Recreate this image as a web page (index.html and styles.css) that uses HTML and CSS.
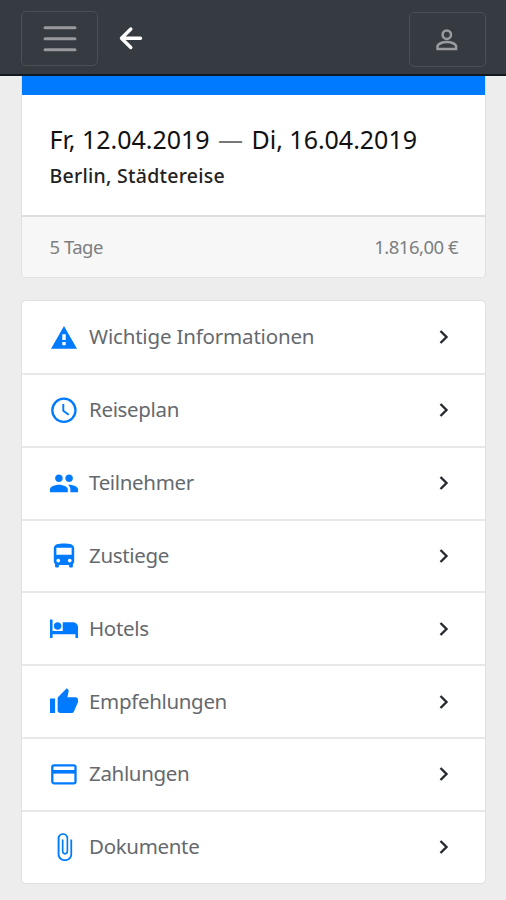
FILE: index.html
```html
<!DOCTYPE html>
<html lang="de">
<head>
<meta charset="utf-8">
<title>Berlin, Städtereise</title>
<link rel="stylesheet" href="styles.css">
</head>
<body>
<header class="navbar">
  <button class="nav-button" aria-label="Menü"><svg width="34" height="28" viewBox="0 0 34 28"><path d="M2 2.8h30M2 13.8h30M2 24.8h30" stroke="#97999c" stroke-width="3" stroke-linecap="round"/></svg></button>
  <a class="back" aria-label="Zurück"><svg width="24" height="24" viewBox="0 0 24 24"><path d="M11.800 3L2.500 12.300l9.300 9.200M3 12.300h18.500" fill="none" stroke="#fff" stroke-width="3.400" stroke-linecap="round" stroke-linejoin="round"/></svg></a>
  <button class="nav-button nav-user" aria-label="Konto"><svg width="22" height="22" viewBox="0 0 22 22" fill="none" stroke="#999b9e" stroke-width="2.500"><circle cx="10.800" cy="5.700" r="4.200"/><path d="M1.500 20v-2.400c0-3 5-4.500 9.300-4.500s9.300 1.500 9.300 4.500V20z"/></svg></button>
</header>
<main>
  <section class="trip">
    <div class="trip-bar"></div>
    <div class="trip-body">
      <h1><span class="from">Fr, 12.04.2019</span><span class="dash">—</span><span class="to">Di, 16.04.2019</span></h1>
      <h2>Berlin, Städtereise</h2>
    </div>
    <footer class="trip-footer"><span>5 Tage</span><span class="price">1.816,00 €</span></footer>
  </section>
  <nav class="menu">
    <a class="row"><svg class="icon" viewBox="0 0 28 28"><path fill-rule="evenodd" d="M14 3L27 25.700H1zM12.300 11.300v5.800h3.400v-5.800zM12.300 19v3.200h3.400V19z"/></svg><span class="label wide">Wichtige Informationen</span><svg class="chevron" viewBox="0 0 12 16"><path d="M2.500 2l6 6-6 6"/></svg></a>
    <a class="row"><svg class="icon line" viewBox="0 0 28 28"><circle cx="13.900" cy="14.300" r="11.600"/><path class="hands" d="M13.300 8v6.800l5.400 4"/></svg><span class="label">Reiseplan</span><svg class="chevron" viewBox="0 0 12 16"><path d="M2.500 2l6 6-6 6"/></svg></a>
    <a class="row"><svg class="icon" viewBox="1 .700 22 22"><path d="M16 11c1.660 0 2.990-1.340 2.990-3S17.660 5 16 5s-3 1.340-3 3 1.340 3 3 3zm-8 0c1.660 0 2.990-1.340 2.990-3S9.660 5 8 5 5 6.340 5 8s1.340 3 3 3zm0 2c-2.330 0-7 1.170-7 3.500V19h14v-2.500c0-2.330-4.670-3.500-7-3.500zm8 0c-.290 0-.620.020-.970.050 1.160.840 1.970 1.970 1.970 3.450V19h6v-2.500c0-2.330-4.670-3.500-7-3.500z"/></svg><span class="label">Teilnehmer</span><svg class="chevron" viewBox="0 0 12 16"><path d="M2.500 2l6 6-6 6"/></svg></a>
    <a class="row"><svg class="icon" viewBox="1 .100 22 22"><path d="M4 16c0 .880.390 1.670 1 2.220V20c0 .550.450 1 1 1h1c.550 0 1-.450 1-1v-1h8v1c0 .550.450 1 1 1h1c.550 0 1-.450 1-1v-1.780c.610-.550 1-1.340 1-2.220V6c0-3.500-3.580-4-8-4s-8 .500-8 4v10zm3.500 1c-.830 0-1.500-.670-1.500-1.500S6.670 14 7.500 14s1.500.670 1.500 1.500S8.330 17 7.500 17zm9 0c-.830 0-1.500-.670-1.500-1.500s.670-1.500 1.500-1.500 1.500.670 1.500 1.500-.670 1.500-1.500 1.500zm1.500-6H6V5.500h12z"/></svg><span class="label">Zustiege</span><svg class="chevron" viewBox="0 0 12 16"><path d="M2.500 2l6 6-6 6"/></svg></a>
    <a class="row"><svg class="icon" viewBox="1 .600 22 22"><path d="M7 13c1.660 0 3-1.340 3-3S8.660 7 7 7s-3 1.340-3 3 1.340 3 3 3zm12-6h-8v7H3V5H1v14.500h2V16.500h18v3h2V11c0-2.210-1.790-4-4-4z"/></svg><span class="label">Hotels</span><svg class="chevron" viewBox="0 0 12 16"><path d="M2.500 2l6 6-6 6"/></svg></a>
    <a class="row"><svg class="icon" viewBox="1 0 22 22"><path d="M1 20.500h4V9H1v11.500zM23 10c0-1.100-.900-2-2-2h-6.310l.950-4.570.030-.320c0-.410-.170-.790-.440-1.060L14.170 1 7.590 7.590C7.220 7.950 7 8.450 7 9v9.500c0 1.100.900 2 2 2h9c.830 0 1.540-.500 1.840-1.220l3.020-7.050c.090-.230.140-.470.140-.730V10z"/></svg><span class="label">Empfehlungen</span><svg class="chevron" viewBox="0 0 12 16"><path d="M2.500 2l6 6-6 6"/></svg></a>
    <a class="row"><svg class="icon line" viewBox="0 0 28 28"><rect x="2.300" y="5.300" width="23.200" height="18" rx="1.700"/><path class="stripe" d="M2.300 11.800h23.200"/></svg><span class="label">Zahlungen</span><svg class="chevron" viewBox="0 0 12 16"><path d="M2.500 2l6 6-6 6"/></svg></a>
    <a class="row"><svg class="icon" viewBox="1 .900 22 22"><path d="M17 6v11.500c0 2.210-1.790 4-4.250 4s-4.250-1.790-4.250-4V5c0-1.380 1.120-2.700 2.750-2.700S14 3.620 14 5v10.500c0 .550-.450 1-1.200 1s-1.200-.450-1.200-1V6h-1.300v9.500c0 1.380 1.120 2.400 2.500 2.400s2.500-1.020 2.500-2.400V5c0-2.210-1.790-4-4.050-4S7 2.790 7 5v12.500c0 3.040 2.560 5.400 5.700 5.400s5.700-2.360 5.700-5.400V6H17z"/></svg><span class="label">Dokumente</span><svg class="chevron" viewBox="0 0 12 16"><path d="M2.500 2l6 6-6 6"/></svg></a>
  </nav>
</main>
</body>
</html>
```
FILE: styles.css
```css
* { box-sizing: border-box; }
body {
  margin: 0;
  height: 900px;
  overflow: hidden;
  background: #ededed;
  font-family: "Noto Sans", "Open Sans", sans-serif;
}
.navbar {
  display: flex;
  height: 76px;
  padding: 11px 20px 0 21px;
  background: #363b42;
  border-bottom: 2px solid #101820;
}
.nav-button {
  display: flex;
  align-items: center;
  justify-content: center;
  width: 77px;
  height: 55px;
  padding: 0;
  background: none;
  border: 1.500px solid #4b5054;
  border-radius: 5px;
}
.back { margin: 15px 0 0 20.500px; height: 24px; }
.nav-user { margin: 1px 0 0 auto; }
.nav-user svg { margin-right: 1px; }
main { padding: 0 20px 0 21px; }
.trip {
  border: 1px solid #e0e0e0;
  border-top: 0;
  border-radius: 0 0 5px 5px;
  background: #fff;
  overflow: hidden;
}
.trip-bar { height: 19px; background: #007bff; }
.trip-body { height: 120px; padding: 26px 28px 0 27.500px; }
h1, h2 { margin: 0; white-space: nowrap; color: #111; }
h1 { display: flex; font-size: 25px; line-height: 36px; font-weight: 400; letter-spacing: -.02px; }
.dash { width: 42px; text-align: center; color: #777; }
h2 { font-size: 19.500px; line-height: 28px; margin-top: 5px; font-weight: 500; letter-spacing: .27px; color: #222; }
.trip-footer {
  display: flex;
  justify-content: space-between;
  height: 62px;
  padding: 0 27px 0 27.500px;
  border-top: 2px solid #dedede;
  background: #f7f7f7;
  color: #7c7f82;
  font-size: 18.500px;
  line-height: 59px;
  letter-spacing: -.5px;
}
.menu {
  display: grid;
  grid-template-rows: 74px repeat(6, 72.8px) 1fr;
  height: 584px;
  margin-top: 22px;
  border: 1.500px solid #e1e1e1;
  border-radius: 5px;
  background: #fff;
}
.row {
  display: flex;
  align-items: center;
  padding: 0 35px 0 28px;
  color: #65696e;
  border-bottom: 2px solid #e8e8e8;
}
.row:last-child { border-bottom: 0; }
.icon { width: 28px; height: 28px; margin-top: -1px; fill: #007bff; }
.line { fill: none; stroke: #007bff; stroke-width: 2.300px; }
.hands { stroke-width: 1.900px; }
.stripe { stroke-width: 3.600px; }
.label { margin: -2px 0 0 11px; font-size: 20.500px; line-height: 30px; white-space: nowrap; font-weight: 400; letter-spacing: -.33px; }
.wide { letter-spacing: -.18px; }
.chevron {
  width: 12px;
  height: 16px;
  margin-left: auto;
  fill: none;
  stroke: #272b2f;
  stroke-width: 2.400px;
}
```
